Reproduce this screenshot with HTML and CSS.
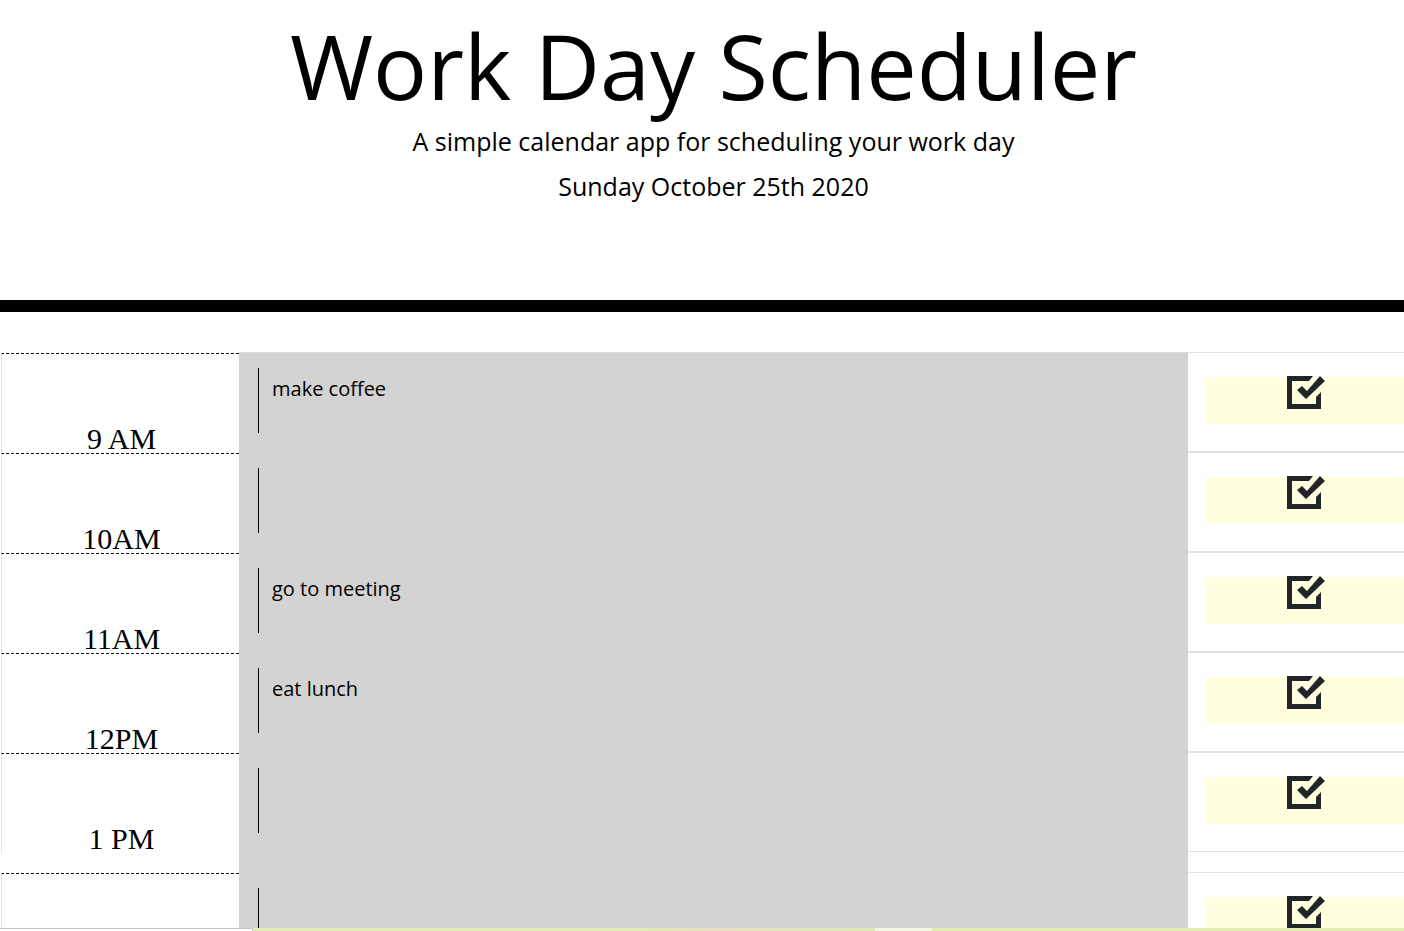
FILE: index.html
```html
<!DOCTYPE html>
<html lang="en">
<head>
<meta charset="utf-8">
<meta name="viewport" content="width=device-width, initial-scale=1">
<title>Work Day Scheduler</title>
<link rel="stylesheet" href="styles.css">
</head>
<body>
<div class="page">
  <header class="header">
    <h1 class="title">Work Day Scheduler</h1>
    <p class="lead">A simple calendar app for scheduling your work day</p>
    <p class="lead">Sunday October 25th 2020</p>
  </header>
  <main class="schedule">
    <div class="row">
      <label class="hour" for="h9">9 AM</label>
      <div class="slot"><textarea class="entry" id="h9">make coffee</textarea></div>
      <div class="action"><button class="save" type="button" aria-label="Save 9 AM"><svg class="icon" viewBox="0 0 38 34"><use href="#check"/></svg></button></div>
    </div>
    <div class="row">
      <label class="hour" for="h10">10AM</label>
      <div class="slot"><textarea class="entry" id="h10"></textarea></div>
      <div class="action"><button class="save" type="button" aria-label="Save 10 AM"><svg class="icon" viewBox="0 0 38 34"><use href="#check"/></svg></button></div>
    </div>
    <div class="row">
      <label class="hour" for="h11">11AM</label>
      <div class="slot"><textarea class="entry" id="h11">go to meeting</textarea></div>
      <div class="action"><button class="save" type="button" aria-label="Save 11 AM"><svg class="icon" viewBox="0 0 38 34"><use href="#check"/></svg></button></div>
    </div>
    <div class="row">
      <label class="hour" for="h12">12PM</label>
      <div class="slot"><textarea class="entry" id="h12">eat lunch</textarea></div>
      <div class="action"><button class="save" type="button" aria-label="Save 12 PM"><svg class="icon" viewBox="0 0 38 34"><use href="#check"/></svg></button></div>
    </div>
    <div class="row">
      <label class="hour" for="h13">1 PM</label>
      <div class="slot slot-last"><textarea class="entry" id="h13"></textarea></div>
      <div class="action"><button class="save" type="button" aria-label="Save 1 PM"><svg class="icon" viewBox="0 0 38 34"><use href="#check"/></svg></button></div>
    </div>
    <div class="row">
      <label class="hour" for="h14"></label>
      <div class="slot"><textarea class="entry" id="h14" aria-label="2 PM"></textarea></div>
      <div class="action"><button class="save" type="button" aria-label="Save 2 PM"><svg class="icon" viewBox="0 0 38 34"><use href="#check"/></svg></button></div>
    </div>
  </main>
</div>
<div class="strip"><div class="strip-status"></div><div class="strip-bar"></div></div>
<svg class="symbols" aria-hidden="true">
  <symbol id="check" viewBox="0 0 38 34">
    <path d="M0 0H26L22 5H5V28H29V21L34 16V33H0Z"/>
    <path d="M10 14L15 10L20 15L33 0L38 5L19 23Z"/>
  </symbol>
</svg>
</body>
</html>
```

FILE: styles.css
```css
* {
  box-sizing: border-box;
}

body {
  margin: 0;
  height: 100vh;
  overflow: hidden;
  background: #fff;
  color: #000;
  font-family: "Open Sans", sans-serif;
}

.page {
  width: calc(100% + 23px);
}

.header {
  min-height: 312px;
  padding-top: 11px;
  border-bottom: 12px solid #000;
  text-align: center;
}

.title {
  margin: 0 0 4px;
  font-size: 90px;
  font-weight: 400;
  line-height: 108px;
}

.lead {
  margin: 0 0 8px;
  font-size: 25px;
  line-height: 37px;
}

.schedule {
  margin-top: 40px;
  padding-left: 1px;
}

.row {
  display: grid;
  grid-template-columns: 238fr 949fr 239fr;
  align-items: start;
}

.hour {
  display: flex;
  align-items: flex-end;
  justify-content: center;
  height: 100px;
  margin-top: 1px;
  margin-bottom: -1px;
  padding-left: 2px;
  border-top: 1px dashed #000;
  border-left: 1px solid #dee2e6;
  font-family: "Liberation Serif", serif;
  font-size: 30px;
  line-height: 28px;
}

.slot {
  height: 100px;
  padding: 16px 19px;
  border-top: 1px solid #d8dadc;
  padding-top: 15px;
  background: #d3d3d3;
}

.slot-last {
  height: 120px;
}

.entry {
  display: block;
  width: 100%;
  height: 65px;
  padding: 6px 13px;
  border: 0;
  border-left: 1px solid #000;
  outline: 0;
  resize: none;
  background: transparent;
  color: #000;
  font-family: inherit;
  font-size: 20px;
  line-height: 30px;
}

.row:not(:first-child) .slot {
  border-top-color: #d3d3d3;
}

.action {
  height: 100px;
  padding: 24px 20px 24px 17px;
  border-top: 1px solid #dee2e6;
  border-bottom: 1px solid #dee2e6;
}

.save {
  display: flex;
  justify-content: center;
  width: 100%;
  height: 47px;
  padding: 0;
  border: 0;
  border-radius: 5px;
  background: #ffffe0;
  color: #212529;
}

.icon {
  width: 38px;
  height: 34px;
  margin-top: -1px;
  fill: currentColor;
}

.symbols {
  display: none;
}

.strip {
  position: fixed;
  right: 0;
  bottom: 0;
  left: 0;
  display: flex;
  height: 3px;
}

.strip-status {
  width: 18%;
  border-top: 1px solid #c8c8c8;
  border-right: 1px solid #c8c8c8;
  background: #fff;
}

.strip-bar {
  flex: 1;
  background: linear-gradient(90deg, #e1ebb3 34%, #e9dfc0 40%, #e5e6c0 46%, #deebb6 54%, #f3f5e3 54%, #f3f5e3 59%, #e0ecb0 59%);
}
```
